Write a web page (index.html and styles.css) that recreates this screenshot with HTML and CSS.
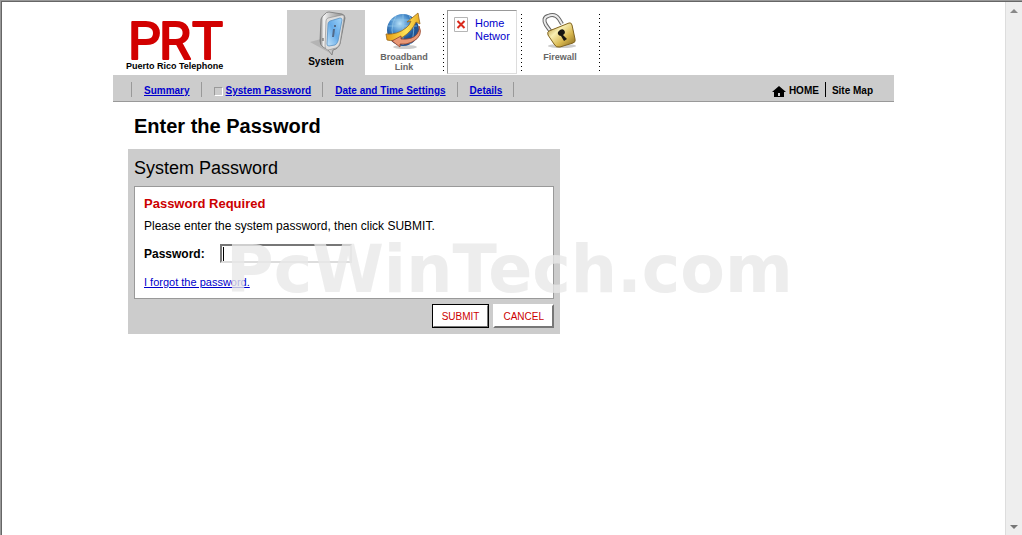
FILE: index.html
```html
<!DOCTYPE html>
<html lang="en">
<head>
  <meta charset="UTF-8" />
  <meta name="viewport" content="width=device-width, initial-scale=1.0"/>
  <title>Enter the Password</title>
  <link rel="stylesheet" href="styles.css">
</head>
<body>

  <div class="window">
    <div class="page">
      <header class="header">
        <svg class="logo" width="104" height="57" viewBox="0 0 104 57" role="img" aria-label="PRT Puerto Rico Telephone">
          <text class="logo-mark" y="43" x="3 34 67">PRT</text>
          <text class="logo-name" x="1" y="53">Puerto Rico Telephone</text>
        </svg>

        <nav class="tabs">
          <a class="tab active" href="#">
            <svg width="40" height="46" viewBox="0 0 40 46">
              <defs>
                <linearGradient id="case" x1="0" x2="1"><stop offset="0" stop-color="#777"/><stop offset=".15" stop-color="#f4f4f4"/><stop offset=".4" stop-color="#c8c8c8"/><stop offset="1" stop-color="#888"/></linearGradient>
                <linearGradient id="screen" x1="0" y1="1" x2="1" y2="0"><stop offset="0" stop-color="#c5e5fb"/><stop offset=".5" stop-color="#65abe8"/><stop offset="1" stop-color="#a4d6fa"/></linearGradient>
              </defs>
              <path d="M4 32L15 29V35L24 43Z" fill="#aaa" opacity=".7"/>
              <path d="M19 4Q20 2 23 2L36 4Q39 5 39 8L34 34Q33 37 30 39L27 40L26 45L22 40L17 37Q14 35 14 31L15 9Q16 6 19 4Z" fill="url(#case)" stroke="#777" stroke-width=".8"/>
              <path d="M22 8L36 5Q39 5 38 8L34 33Q33 37 30 38L22 40Q19 40 19 36L20 11Q20 9 22 8Z" fill="#dedede" stroke="#888" stroke-width=".6"/>
              <path d="M24 11L34 8Q36 8 36 10L32 31Q31 34 29 35L23 36Q21 36 21 34L22 14Q22 12 24 11Z" fill="url(#screen)" stroke="#5a93c4" stroke-width=".8"/>
              <path d="M29 15L29 17M28 19L27 27" fill="none" stroke="#526a89" stroke-width="2"/>
              <path d="M17 28V31" stroke="#555"/>
            </svg>
            <span>System</span>
          </a>
          <a class="tab dotted" href="#">
            <svg width="40" height="42" viewBox="0 0 40 42">
              <defs>
                <radialGradient id="globe" cx=".4" cy=".3"><stop offset="0" stop-color="#b9e2f9"/><stop offset=".6" stop-color="#468bcb"/><stop offset="1" stop-color="#205493"/></radialGradient>
                <linearGradient id="gold"><stop offset="0" stop-color="#e49a12"/><stop offset=".6" stop-color="#ffe457"/><stop offset="1" stop-color="#e8ab24"/></linearGradient>
              </defs>
              <ellipse cx="21" cy="37" rx="12" ry="2" fill="#ccc"/>
              <circle cx="19" cy="20" r="16" fill="url(#globe)"/>
              <path d="M4 16H33M7 10H30M19 4V35M12 6Q4 20 12 34M25 5Q34 20 26 34" fill="none" stroke="#94c9e9" stroke-width=".7"/>
              <path d="M2 24Q13 25 22 18Q26 15 27 11L23 12L34 3L36 14L32 12Q28 21 19 27Q10 32 3 30Z" fill="url(#gold)" stroke="#9b681d" stroke-width=".8"/>
              <path d="M35 16Q40 26 28 32Q22 35 16 34L16 37L8 31L17 26L17 29Q29 30 33 24Q36 20 35 16Z" fill="#e99876" stroke="#93442d" stroke-width=".8"/>
            </svg>
            <span>Broadband<br>Link</span>
          </a>
          <div class="tab dotted">
            <a class="missing" href="#">
              <svg width="14" height="15" viewBox="0 0 14 15">
                <path d="M.5 .5H13.5V14.5H.5Z" fill="#fff" stroke="#b5b5b5"/>
                <path d="M3.5 4L10.5 11M10.5 4L3.5 11" stroke="#d92a1c" stroke-width="2"/>
              </svg>
              <span>Home Network</span>
            </a>
          </div>
          <a class="tab dotted" href="#">
            <svg width="40" height="42" viewBox="0 0 40 42">
              <defs><linearGradient id="brass" x1="0" y1="0" x2="1" y2="1"><stop offset="0" stop-color="#a98422"/><stop offset=".35" stop-color="#f9efb2"/><stop offset=".65" stop-color="#d7b64d"/><stop offset="1" stop-color="#80631e"/></linearGradient></defs>
              <ellipse cx="22" cy="36" rx="14" ry="2" fill="#ccc"/>
              <path d="M11 22L6 15Q2 8 8 6Q15 3 19 9L22 14" fill="none" stroke="#666" stroke-width="4"/>
              <path d="M11 22L6 15Q2 8 8 6Q15 3 19 9L22 14" fill="none" stroke="#ececec" stroke-width="2"/>
              <path d="M9 21L29 13Q31 12 32 15L35 29Q36 32 33 33L20 37Q16 38 14 34L8 25Q7 22 9 21Z" fill="url(#brass)" stroke="#80631f"/>
              <path d="M20 20Q24 18 25 22Q25 24 23 25L27 29L24 31L21 26Q17 25 18 22Z" fill="#171611"/>
            </svg>
            <span>Firewall</span>
          </a>
        </nav>
      </header>

      <nav class="menu">
        <ul class="menu-links">
          <li><a href="#">Summary</a></li>
          <li><span class="marker"></span><a href="#">System Password</a></li>
          <li><a href="#">Date and Time Settings</a></li>
          <li><a href="#">Details</a></li>
        </ul>
        <div class="menu-right">
          <a class="home" href="#">
            <svg width="14" height="11" viewBox="0 0 14 11"><path d="M7 0L14 6H12V11H2V6H0Z"/><path d="M6 7H8V10H6Z" fill="#ccc"/></svg>
            HOME
          </a>
          <a class="sitemap" href="#">Site Map</a>
        </div>
      </nav>

      <main class="content">
        <h1>Enter the Password</h1>
        <form class="panel">
          <h2>System Password</h2>
          <div class="box">
            <h3>Password Required</h3>
            <p>Please enter the system password, then click SUBMIT.</p>
            <div class="field">
              <label for="password">Password:</label>
              <span class="entry"><input type="password" id="password"><span class="caret"></span></span>
            </div>
            <a class="forgot" href="#">I forgot the password.</a>
          </div>
          <div class="actions">
            <button type="submit" class="default">SUBMIT</button>
            <button type="button">CANCEL</button>
          </div>
        </form>
        <div class="watermark">PcWinTech.com</div>
      </main>
    </div>

    <div class="scrollbar">
      <svg width="8" height="5" viewBox="0 0 8 5"><path d="M4 0L8 4H0Z" fill="#888"/></svg>
      <svg width="8" height="5" viewBox="0 0 8 5"><path d="M0 0H8L4 4Z" fill="#777"/></svg>
    </div>
  </div>

</body>
</html>
```
FILE: styles.css
```css
* {
  box-sizing: border-box;
}

body {
  margin: 0;
  background: #fff;
  border-top: 1px solid #999;
  border-left: 1px solid #999;
  color: #000;
  font-family: "Liberation Sans", Arial, sans-serif;
  font-size: 12px;
}

h1, h2, h3, p, ul {
  margin: 0;
  padding: 0;
}

a {
  color: #0000cc;
}

svg {
  display: block;
  flex: none;
}

.window {
  display: flex;
  min-height: calc(100vh - 1px);
  border-top: 1px solid #666;
  border-left: 1px solid #666;
}

.page {
  flex: 1;
  max-width: 781px;
  margin: 0 auto;
  padding-top: 8px;
}

/* Header */
.header {
  display: flex;
  height: 65px;
}

.logo {
  margin: 6px 58px 0 12px;
  overflow: visible;
}

.logo-mark {
  font-family: Roboto, sans-serif;
  font-size: 52px;
  fill: #d20000;
  stroke: #d20000;
  stroke-width: 2px;
  stroke-linejoin: round;
}

.logo-name {
  font-size: 9px;
  font-weight: bold;
}

.tabs {
  display: flex;
}

.tab {
  position: relative;
  display: flex;
  flex-direction: column;
  align-items: center;
  width: 78px;
  color: #666;
  font-size: 9px;
  font-weight: bold;
  line-height: 10px;
  text-align: center;
  text-decoration: none;
}

.tab.active {
  background: #ccc;
  color: #000;
  font-size: 10px;
  line-height: 12px;
}

.tab.dotted::after {
  content: "";
  position: absolute;
  top: 4px;
  right: -1px;
  bottom: 4px;
  width: 1px;
  background: repeating-linear-gradient(#000 0 1px, transparent 1px 4px);
}

.missing {
  display: flex;
  gap: 7px;
  align-items: flex-start;
  width: 70px;
  height: 64px;
  padding: 6px;
  overflow: hidden;
  border: 1px solid;
  border-color: #999 #ddd #ddd #999;
  color: #0000cc;
  font-size: 11px;
  font-weight: normal;
  line-height: 13px;
  text-align: left;
  text-decoration: none;
}

.missing span {
  overflow: hidden;
}

/* Menu bar */
.menu {
  display: flex;
  justify-content: space-between;
  align-items: center;
  height: 27px;
  padding: 3px 21px 0 18px;
  background: #ccc;
  border-bottom: 1px solid #999;
  font-size: 10px;
  font-weight: bold;
  line-height: 12px;
}

.menu-links {
  display: flex;
  list-style: none;
  border-right: 1px solid #999;
}

.menu-links li {
  display: flex;
  align-items: center;
  padding: 3px 11px 0 12px;
  border-left: 1px solid #999;
}

.marker {
  width: 9px;
  height: 9px;
  margin-right: 3px;
  border: 1px solid;
  border-color: #999 #fff #fff #999;
}

.menu-right {
  display: flex;
}

.menu-right a {
  padding-top: 3px;
  color: #000;
  text-decoration: none;
}

.home {
  display: flex;
  align-items: center;
  gap: 3px;
  padding-right: 6px;
  border-right: 1px solid #000;
}

.sitemap {
  padding-left: 6px;
}

/* Password form */
.content {
  position: relative;
  padding: 11px 15px;
}

h1 {
  padding-left: 6px;
  margin-bottom: 10px;
  font-size: 20px;
  line-height: 26px;
}

.panel {
  max-width: 432px;
  padding: 6px;
  background: #ccc;
}

h2 {
  margin-bottom: 5px;
  font-size: 18px;
  font-weight: normal;
  line-height: 26px;
}

.box {
  padding: 9px;
  background: #fff;
  border: 1px solid #999;
}

h3 {
  margin-bottom: 6px;
  color: #cc0000;
  font-size: 13px;
  line-height: 16px;
}

.box p {
  margin-bottom: 10px;
  line-height: 16px;
}

.field {
  display: flex;
  align-items: center;
  margin-bottom: 12px;
}

.field label {
  width: 76px;
  font-weight: bold;
}

.entry {
  position: relative;
}

.entry input {
  display: block;
  width: 132px;
  height: 19px;
  padding: 1px 2px;
  border: 2px solid;
  border-color: #777 #ddd #ddd #777;
  background: #fff;
}

.caret {
  position: absolute;
  left: 3px;
  top: 3px;
  width: 1px;
  height: 14px;
  background: #000;
}

.forgot {
  display: block;
  font-size: 11px;
  line-height: 14px;
}

.actions {
  display: flex;
  justify-content: flex-end;
  gap: 4px;
  padding-top: 5px;
}

.actions button {
  height: 24px;
  padding: 0 8px;
  border: 2px solid;
  border-color: #fff #777 #777 #fff;
  background: #fff;
  color: #cc0000;
  font-family: inherit;
  font-size: 10px;
}

.actions .default {
  outline: 1px solid #000;
  outline-offset: -1px;
}

.watermark {
  position: absolute;
  left: 113px;
  top: 130px;
  color: rgba(232, 232, 232, 0.78);
  font: bold 65px/76px "DejaVu Sans", Verdana, sans-serif;
  pointer-events: none;
}

/* Scroll bar */
.scrollbar {
  display: flex;
  flex-direction: column;
  justify-content: space-between;
  align-items: center;
  width: 17px;
  padding: 7px 0 5px;
  background: #eee;
  border-left: 1px solid #ddd;
}
```
